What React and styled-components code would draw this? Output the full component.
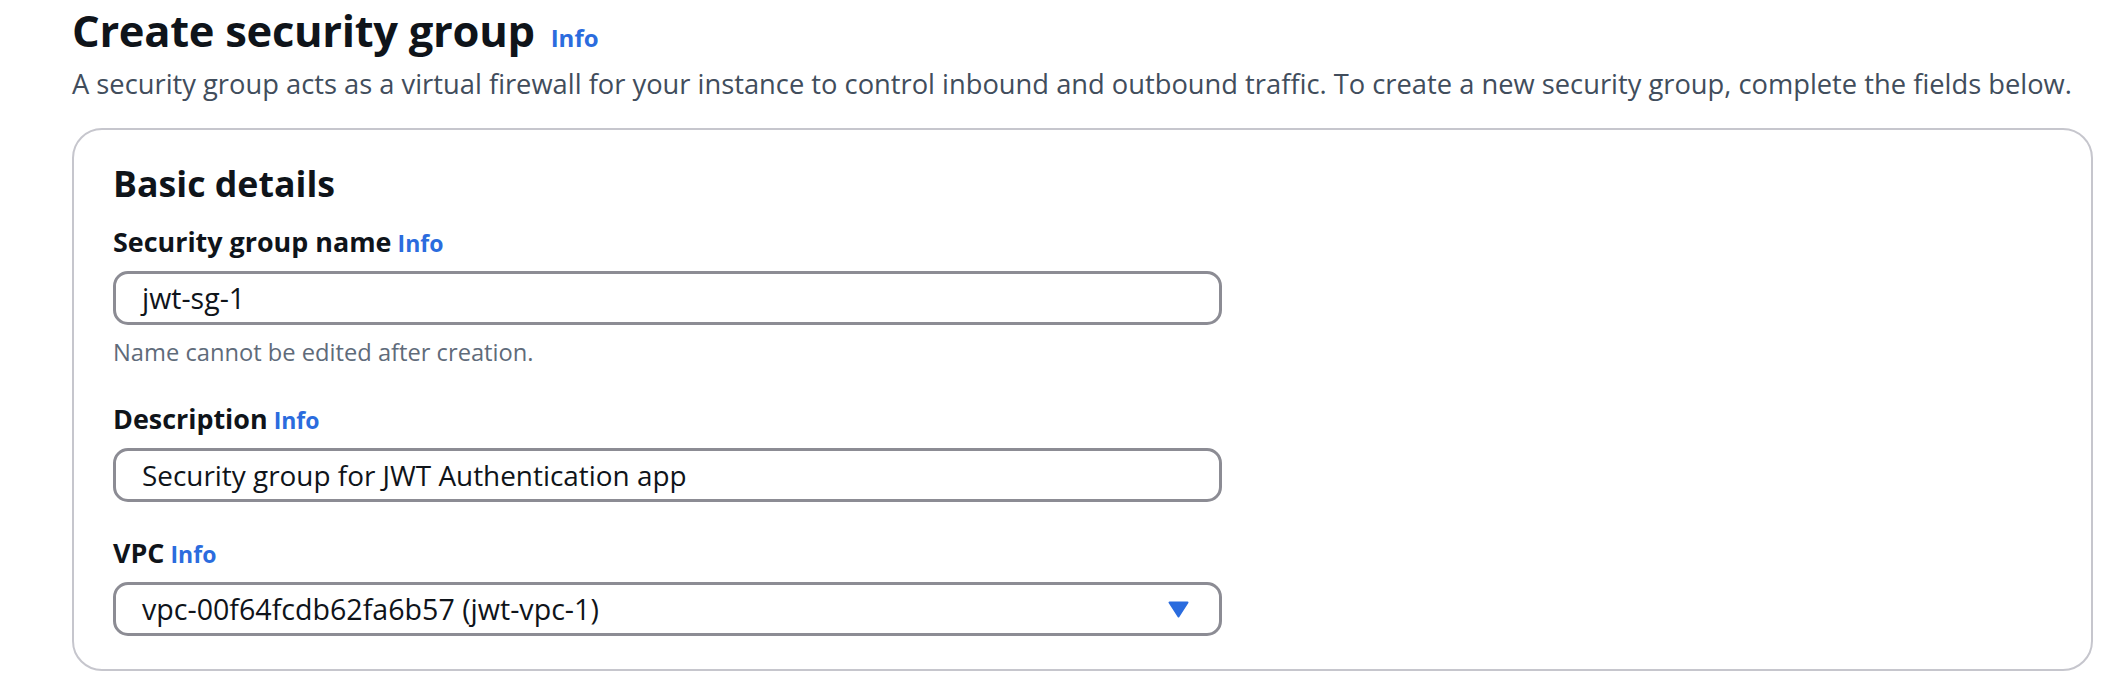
import React from "react";
import styled, { createGlobalStyle } from "styled-components";

const Global = createGlobalStyle`
  html, body { margin: 0; padding: 0; background: #ffffff; }
  body { font-family: "Open Sans", "Noto Sans", sans-serif; color: #0f141a; }
  * { box-sizing: border-box; }
`;

const Page = styled.div`
  padding: 3px 13px 0 72px;
`;

const TitleRow = styled.div`
  display: flex;
  align-items: baseline;
  gap: 16px;
`;

const Title = styled.h1`
  margin: 0;
  font-size: 43.5px;
  line-height: 56px;
  font-weight: 700;
  letter-spacing: -0.3px;
  color: #0f141a;
`;

const InfoLink = styled.a`
  color: #2b6cde;
  font-weight: 700;
  font-size: ${(p) => p.$size || 23}px;
  text-decoration: none;
  cursor: pointer;
`;

const Lead = styled.p`
  margin: 9px 0 0;
  font-size: 27.3px;
  line-height: 32px;
  color: #414d5c;
  white-space: nowrap;
`;

const Card = styled.section`
  margin-top: 28px;
  border: 2px solid #c6c6cd;
  border-radius: 30px;
  padding: 31px 38px 33px 39px;
`;

const CardTitle = styled.h2`
  margin: 0;
  font-size: 35.7px;
  line-height: 44px;
  font-weight: 700;
  color: #0f141a;
`;

const Fields = styled.div`
  margin-top: 21px;
  display: flex;
  flex-direction: column;
  gap: 35.5px;
  width: 1109px;
`;

const Field = styled.div`
  display: flex;
  flex-direction: column;
  gap: 12px;
`;

const LabelRow = styled.div`
  display: flex;
  align-items: baseline;
  gap: 6px;
  font-size: 26.9px;
  line-height: 32px;
`;

const Label = styled.label`
  font-weight: 700;
  color: #0f141a;
`;

const Control = styled.div`
  height: 54px;
  border: 3px solid #8c8c94;
  border-radius: 15px;
  padding: 0 30px 0 26px;
  display: flex;
  align-items: center;
  justify-content: space-between;
  font-size: ${(p) => p.$size || 28}px;
  line-height: 48px;
  color: #0f141a;
  background: #ffffff;
`;

const Hint = styled.div`
  font-size: 23.7px;
  line-height: 30px;
  color: #5f6b7a;
`;

const Caret = () => (
  <svg width="21" height="17" viewBox="0 0 21 17" aria-hidden="true">
    <path d="M1.5 1.5 H19.5 L10.5 15.5 Z" fill="#2b6cde" stroke="#2b6cde" strokeWidth="2" strokeLinejoin="round" />
  </svg>
);

export default function App() {
  return (
    <>
      <Global />
      <Page>
        <TitleRow>
          <Title>Create security group</Title>
          <InfoLink $size={24}>Info</InfoLink>
        </TitleRow>
        <Lead>
          A security group acts as a virtual firewall for your instance to control inbound and outbound traffic. To
          create a new security group, complete the fields below.
        </Lead>
        <Card>
          <CardTitle>Basic details</CardTitle>
          <Fields>
            <Field>
              <LabelRow>
                <Label>Security group name</Label>
                <InfoLink>Info</InfoLink>
              </LabelRow>
              <Control $size={28.5}>jwt-sg-1</Control>
              <Hint>Name cannot be edited after creation.</Hint>
            </Field>
            <Field>
              <LabelRow>
                <Label>Description</Label>
                <InfoLink>Info</InfoLink>
              </LabelRow>
              <Control $size={27.9}>Security group for JWT Authentication app</Control>
            </Field>
            <Field>
              <LabelRow>
                <Label>VPC</Label>
                <InfoLink>Info</InfoLink>
              </LabelRow>
              <Control $size={28.6}>
                <span>vpc-00f64fcdb62fa6b57 (jwt-vpc-1)</span>
                <Caret />
              </Control>
            </Field>
          </Fields>
        </Card>
      </Page>
    </>
  );
}
